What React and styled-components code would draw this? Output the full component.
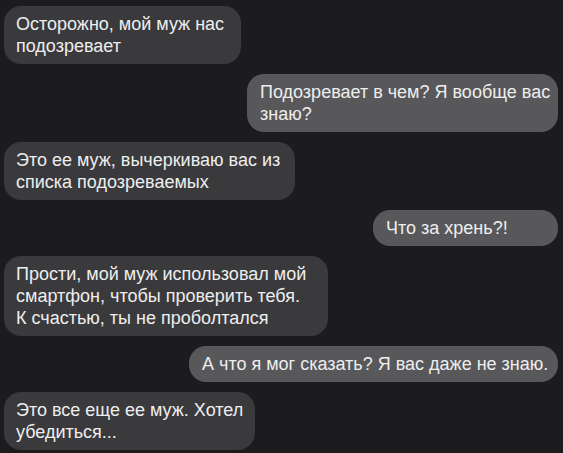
import React from "react";
import styled, { createGlobalStyle } from "styled-components";

const messages = [
    { side: "in", width: 237, lines: ["Осторожно, мой муж нас", "подозревает"] },
    { side: "out", width: 311, lines: ["Подозревает в чем? Я вообще вас", "знаю?"] },
    { side: "in", width: 291, lines: ["Это ее муж, вычеркиваю вас из", "списка подозреваемых"] },
    { side: "out", width: 185, lines: ["Что за хрень?!"] },
    {
        side: "in",
        width: 324,
        lines: [
            "Прости, мой муж использовал мой",
            "смартфон, чтобы проверить тебя.",
            "К счастью, ты не проболтался",
        ],
    },
    { side: "out", width: 369, lines: ["А что я мог сказать? Я вас даже не знаю."] },
    { side: "in", width: 251, lines: ["Это все еще ее муж. Хотел", "убедиться..."] },
];

const App = () => {
    return (
        <>
            <GlobalStyle />
            <Chat>
                {messages.map((m, i) => (
                    <Bubble key={i} $side={m.side} $width={m.width}>
                        {m.lines.map((line, j) => (
                            <Line key={j}>{line}</Line>
                        ))}
                    </Bubble>
                ))}
            </Chat>
        </>
    );
};

const GlobalStyle = createGlobalStyle`
    html, body {
        margin: 0;
        padding: 0;
        background: #1c1c1f;
    }
    body {
        width: 563px;
        height: 453px;
        overflow: hidden;
        font-family: "Liberation Sans", Arial, sans-serif;
    }
`;

const Chat = styled.div`
    display: flex;
    flex-direction: column;
    gap: 10px;
    padding: 6px 5px 0 4px;
    height: 453px;
    box-sizing: border-box;
    background: #1c1c1f;
`;

const Bubble = styled.div`
    align-self: ${(p) => (p.$side === "out" ? "flex-end" : "flex-start")};
    width: ${(p) => p.$width}px;
    box-sizing: border-box;
    padding: 7px 10px 7px ${(p) => (p.$side === "out" ? 13 : 12)}px;
    border-radius: 17px;
    background: ${(p) => (p.$side === "out" ? "#58585b" : "#3a3a3d")};
    color: #eeeeee;
    font-size: 18px;
    line-height: 22px;
`;

const Line = styled.div`
    white-space: pre;
    word-spacing: ${(p) => (p.$tight ? "-1px" : "0")};
`;

export default App;
